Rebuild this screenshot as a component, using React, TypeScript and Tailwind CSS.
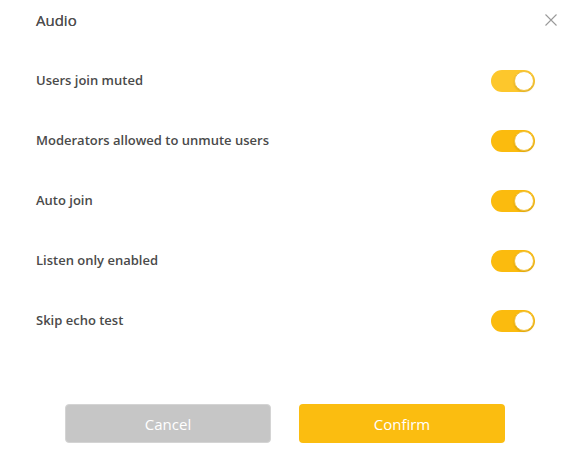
import React from 'react';

const settings = [
    { label: 'Users join muted', first: true },
    { label: 'Moderators allowed to unmute users' },
    { label: 'Auto join' },
    { label: 'Listen only enabled' },
    { label: 'Skip echo test' },
];

function Toggle(props: { light?: boolean }) {
    const track = props.light ? 'bg-[#fdc72c]' : 'bg-[#fbbb0e]';
    return (
        <div className={`relative w-[44px] h-[22px] rounded-full ${track}`}>
            <div className="absolute right-[1px] top-[1px] w-[20px] h-[20px] rounded-full bg-white border border-[#f3c23a] shadow-[0_1px_2px_rgba(0,0,0,0.15)]" />
        </div>
    );
}

export default function App() {
    return (
        <div className="w-[570px] h-[472px] bg-white flex flex-col" style={{ fontFamily: '"Open Sans", "Noto Sans", sans-serif' }}>
            <header className="flex items-center justify-between pl-[36px] pr-[12px] h-[40px]">
                <h1 className="text-[15px] text-[#4f4f4f] [text-shadow:0_0_0.3px_#4f4f4f]">Audio</h1>
                <svg width="14" height="14" viewBox="0 0 14 14" className="stroke-[#9a9a9a]">
                    <path d="M1.5 1.5 L12.5 12.5 M12.5 1.5 L1.5 12.5" strokeWidth="1.1" fill="none" />
                </svg>
            </header>

            <div className="flex flex-col pl-[36px] pr-[35px] mt-[11px]">
                {settings.map((s) => (
                    <div key={s.label} className="flex items-center justify-between h-[60px]">
                        <span className="text-[13px] font-semibold text-[#4a4a4a]">{s.label}</span>
                        <Toggle light={s.first} />
                    </div>
                ))}
            </div>

            <footer className="flex justify-center gap-[28px] mt-[53px]">
                <button className="w-[206px] h-[39px] rounded-[4px] bg-[#c6c6c6] border border-[#d4d4d4] text-white text-[15px] pt-[1px]">Cancel</button>
                <button className="w-[206px] h-[39px] rounded-[4px] bg-[#fbbd10] text-white text-[15px] pt-[1px]">Confirm</button>
            </footer>
        </div>
    );
}
